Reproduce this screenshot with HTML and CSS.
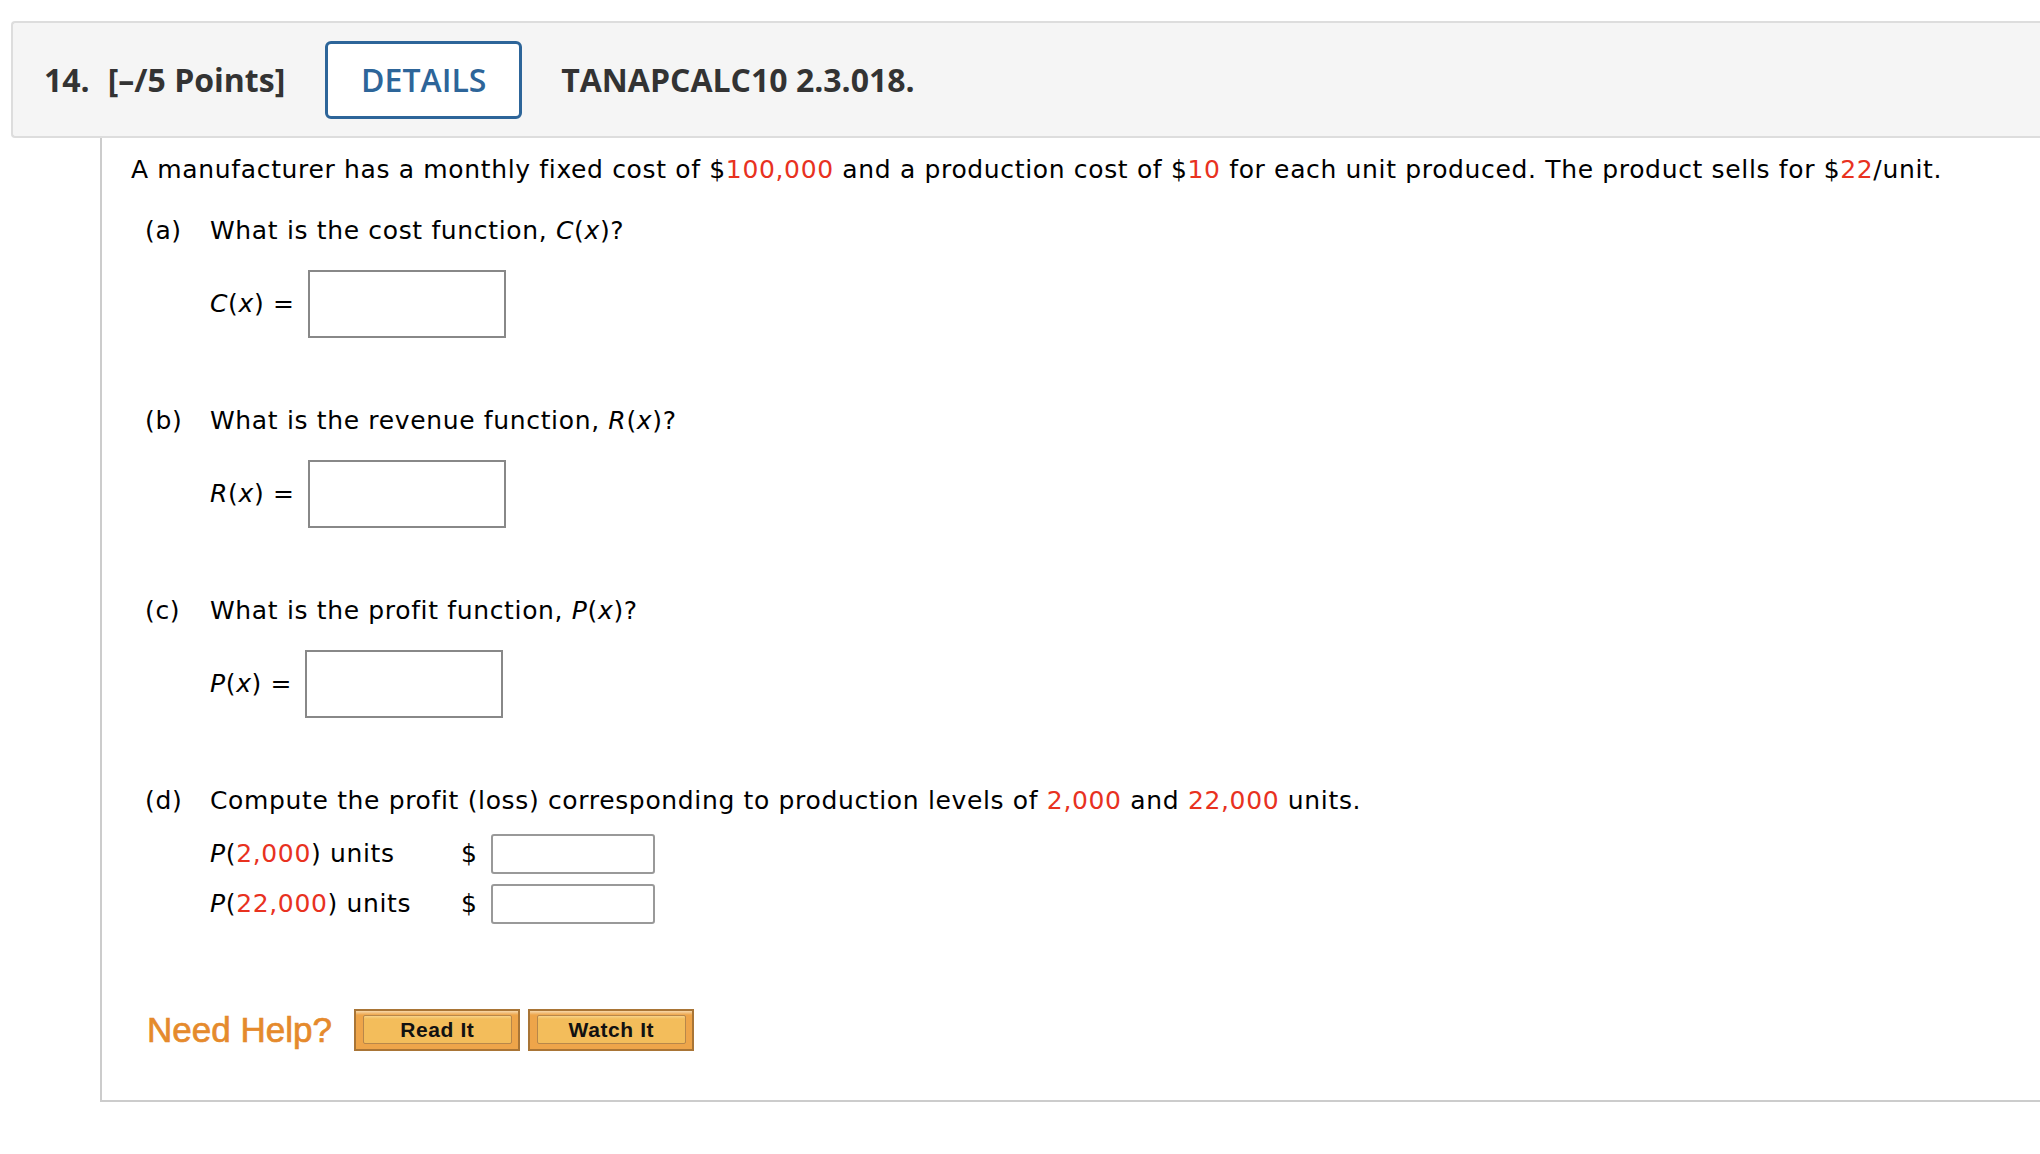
FILE: index.html
```html
<!DOCTYPE html>
<html lang="en">
<head>
<meta charset="utf-8">
<title>Question 14</title>
<link rel="stylesheet" href="styles.css">
</head>
<body>
<div class="page">
  <div class="qhead">
    <span class="qnum">14.</span>
    <span class="qpts">[–/5 Points]</span>
    <span class="details">DETAILS</span>
    <span class="qid">TANAPCALC10 2.3.018.</span>
  </div>
  <div class="qbody">
    <p class="intro">A manufacturer has a monthly fixed cost of $<span class="red">100,000</span> and a production cost of $<span class="red">10</span> for each unit produced. The product sells for $<span class="red">22</span>/unit.</p>

    <div class="part">
      <div class="pq"><span class="pl">(a)</span><span>What is the cost function, <i>C</i>(<i>x</i>)?</span></div>
      <div class="ans"><span class="albl"><i>C</i>(<i>x</i>) =</span><span class="box"></span></div>
    </div>

    <div class="part">
      <div class="pq"><span class="pl">(b)</span><span>What is the revenue function, <i>R</i>(<i>x</i>)?</span></div>
      <div class="ans"><span class="albl"><i>R</i>(<i>x</i>) =</span><span class="box"></span></div>
    </div>

    <div class="part">
      <div class="pq"><span class="pl">(c)</span><span>What is the profit function, <i>P</i>(<i>x</i>)?</span></div>
      <div class="ans"><span class="albl"><i>P</i>(<i>x</i>) =</span><span class="box"></span></div>
    </div>

    <div class="part partd">
      <div class="pq"><span class="pl">(d)</span><span>Compute the profit (loss) corresponding to production levels of <span class="red">2,000</span> and <span class="red">22,000</span> units.</span></div>
      <div class="grid">
        <span><i>P</i>(<span class="red">2,000</span>) units</span><span class="dol">$</span><span class="sbox"></span>
        <span><i>P</i>(<span class="red">22,000</span>) units</span><span class="dol">$</span><span class="sbox"></span>
      </div>
    </div>

    <div class="help">
      <span class="need">Need Help?</span>
      <span class="hbtn"><span class="hin">Read It</span></span>
      <span class="hbtn"><span class="hin">Watch It</span></span>
    </div>
  </div>
</div>
</body>
</html>
```

FILE: styles.css
```css
html, body {
  margin: 0;
  padding: 0;
  background: #ffffff;
}

.page {
  padding: 21px 0 0 11px;
  font-family: "DejaVu Sans", Verdana, sans-serif;
  color: #000;
}

.qhead {
  display: flex;
  align-items: center;
  height: 113px;
  background: #f5f5f5;
  border: 2px solid #dddddd;
  border-right: none;
  border-radius: 4px 0 0 4px;
  padding-left: 31px;
  font-family: "Open Sans", sans-serif;
  font-size: 32px;
  color: #333333;
}

.qnum { font-weight: 700; }
.qpts { font-weight: 700; margin-left: 18px; }

.details {
  display: flex;
  align-items: center;
  justify-content: center;
  box-sizing: border-box;
  width: 197px;
  height: 78px;
  margin-left: 40px;
  border: 3px solid #2d6599;
  border-radius: 6px;
  background: #ffffff;
  color: #2d6599;
  font-weight: 600;
}

.qid { font-weight: 700; margin-left: 39px; }

.qbody {
  margin-left: 89px;
  border-left: 2px solid #cccccc;
  border-bottom: 2px solid #cccccc;
  padding: 17px 0 49px 29px;
  font-size: 25px;
  letter-spacing: 0.65px;
  line-height: 30px;
}

.red { color: #e8321f; }

.intro { margin: 0 0 31px 0; }

.part { margin-left: 14px; margin-bottom: 68px; }

.pq { display: flex; }
.pl { width: 65px; flex: none; }

.ans {
  display: flex;
  align-items: center;
  margin: 24px 0 0 65px;
}

.albl { margin-right: 13px; }

.box {
  box-sizing: border-box;
  width: 198px;
  height: 68px;
  border: 2px solid #888888;
  background: #fff;
}

.partd { margin-bottom: 85px; }

.grid {
  display: grid;
  grid-template-columns: 251px 30px 164px;
  row-gap: 10px;
  align-items: center;
  margin: 18px 0 0 65px;
}

.sbox {
  box-sizing: border-box;
  width: 164px;
  height: 40px;
  border: 2px solid #999999;
  border-radius: 3px;
  background: #fff;
}

.help {
  display: flex;
  align-items: center;
  margin-left: 16px;
  letter-spacing: 0;
}

.need {
  font-family: "Liberation Sans", Arial, sans-serif;
  font-size: 35px;
  line-height: 40px;
  color: #e58a2c;
  -webkit-text-stroke: 0.7px #e58a2c;
  margin-right: 22px;
}

.hbtn {
  box-sizing: border-box;
  width: 166px;
  height: 42px;
  margin-right: 8px;
  padding: 4px 6px 5px 7px;
  border: 2px solid #a97536;
  background: linear-gradient(#f6d7a9 0, #eea54a 4px, #eea54a 100%);
  display: flex;
}

.hin {
  flex: 1;
  display: flex;
  align-items: center;
  justify-content: center;
  border: 1px solid #b8874a;
  border-radius: 2px;
  background: linear-gradient(#f7d38a 0, #f3bd5b 3px, #f3bd5b 100%);
  font-family: "Liberation Sans", Arial, sans-serif;
  font-weight: 700;
  font-size: 21px;
  letter-spacing: 0.6px;
  color: #111;
}
```
